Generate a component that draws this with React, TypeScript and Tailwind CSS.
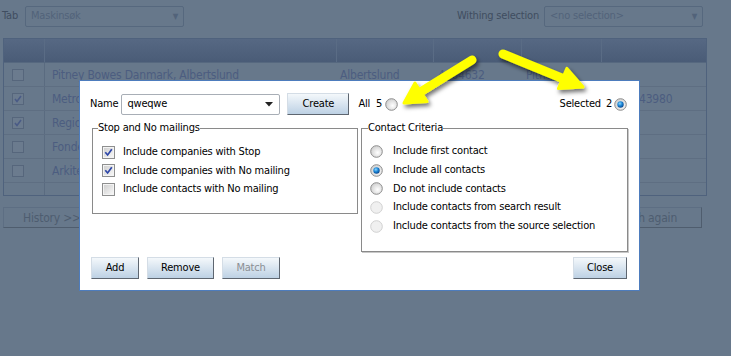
import React from 'react';

const font = "font-['DejaVu_Sans_Condensed','Liberation_Sans',sans-serif]";

function Check({checked, dim}: {checked?: boolean; dim?: boolean}) {
  if (dim) {
    return (
      <svg width="12" height="12" viewBox="0 0 12 12">
        <rect x="0.5" y="0.5" width="11" height="11" fill="#6b7b8e" stroke="#56667c" />
        {checked && <path d="M3 6 L5 8.5 L9 3" fill="none" stroke="#4a5b86" strokeWidth="1.6" />}
      </svg>
    );
  }
  return (
    <svg width="13" height="13" viewBox="0 0 13 13">
      <defs>
        <linearGradient id="cbg" x1="0" y1="0" x2="1" y2="1">
          <stop offset="0" stopColor="#d0d0d0" />
          <stop offset="1" stopColor="#f6f6f6" />
        </linearGradient>
      </defs>
      <rect x="0.5" y="0.5" width="12" height="12" fill="#f4f4f4" stroke="#8e8f8f" />
      <rect x="2" y="2" width="9" height="9" fill="url(#cbg)" />
      {checked && (
        <path d="M3.3 6.3 L5.6 9 L9.8 3.2" fill="none" stroke="#2d46a8" strokeWidth="1.7" />
      )}
    </svg>
  );
}

function Radio({selected, disabled}: {selected?: boolean; disabled?: boolean}) {
  return (
    <svg width="13" height="13" viewBox="0 0 13 13">
      <defs>
        <radialGradient id="rbg" cx="0.6" cy="0.6" r="0.7">
          <stop offset="0" stopColor="#ffffff" />
          <stop offset="1" stopColor="#c9c9c9" />
        </radialGradient>
        <radialGradient id="rdot" cx="0.4" cy="0.35" r="0.7">
          <stop offset="0" stopColor="#8fd6ff" />
          <stop offset="0.5" stopColor="#1a86d6" />
          <stop offset="1" stopColor="#0a3f86" />
        </radialGradient>
      </defs>
      <circle
        cx="6.5"
        cy="6.5"
        r="5.8"
        fill={disabled ? '#f0f0f0' : 'url(#rbg)'}
        stroke={disabled ? '#d0d0d0' : '#8d8d8d'}
        strokeWidth="1"
      />
      {selected && <circle cx="6.5" cy="6.5" r="3.2" fill="url(#rdot)" />}
    </svg>
  );
}

function Btn({label, w, disabled}: {label: string; w: string; disabled?: boolean}) {
  return (
    <button
      className={`${w} h-[22px] border border-[#d4dde6] border-r-[#5e6670] border-b-[#5e6670] bg-linear-to-b from-[#f4f8fb] to-[#bdd1e4] text-[11px] ${
        disabled ? 'text-[#8b8f94]' : 'text-black'
      }`}
    >
      {label}
    </button>
  );
}

const rows = [
  {name: 'Pitney Bowes Danmark, Albertslund', checked: false},
  {name: 'Metroxpress Danmark A/S', checked: true},
  {name: 'Region Hovedstaden', checked: true},
  {name: 'Fonden for Entreprenørskab', checked: false},
  {name: 'Arkitektforeningen', checked: false},
];

function Arrows() {
  return (
    <svg className="absolute top-0 left-0 pointer-events-none" width="731" height="356">
      <defs>
        <filter id="sh" x="-20%" y="-20%" width="140%" height="140%">
          <feDropShadow dx="2" dy="3" stdDeviation="2" floodColor="#000" floodOpacity="0.55" />
        </filter>
      </defs>
      <g filter="url(#sh)" fill="#ffff00" stroke="#ffff00" strokeLinejoin="round">
        <line x1="472" y1="60" x2="422" y2="91" strokeWidth="9" strokeLinecap="round" />
        <polygon points="404,103 427,101.5 415,83" strokeWidth="3" />
        <line x1="503" y1="54" x2="564" y2="79" strokeWidth="9" strokeLinecap="round" />
        <polygon points="583,87 558.4,88.6 566.9,68.4" strokeWidth="3" />
      </g>
    </svg>
  );
}

export default function App() {
  return (
    <div
      className={`relative w-[731px] h-[356px] overflow-hidden bg-[#67788b] text-[11px] tracking-[-0.2px] ${font}`}
    >
      {/* dimmed page behind */}
      <div className="flex items-center pt-[6px] pl-[2px] pr-[28px] text-[#3f4d60]">
        <span>Tab</span>
        <div className="ml-[7px] w-[159px] h-[21px] border border-[#56687e] rounded-[2px] flex items-center px-[5px] text-[#52637a]">
          <span className="flex-1">Maskinsøk</span>
          <span className="text-[8px]">▼</span>
        </div>
        <span className="ml-auto mr-[5px]">Withing selection</span>
        <div className="w-[159px] h-[21px] border border-[#56687e] rounded-[2px] flex items-center px-[5px] text-[#52637a]">
          <span className="flex-1">&lt;no selection&gt;</span>
          <span className="text-[8px]">▼</span>
        </div>
      </div>

      <div className="ml-[3px] mt-[11px] w-[704px] border border-[#4f627d] text-[#4c5d80] text-[12px]">
        <div className="h-[24px] bg-linear-to-b from-[#566883] to-[#4a5c77] grid grid-cols-[41px_292px_97px_88px_80px_1fr] border-b border-[#56687f]">
          <div className="border-r border-[#5a6c85]" />
          <div className="border-r border-[#5a6c85]" />
          <div className="border-r border-[#5a6c85]" />
          <div className="border-r border-[#5a6c85]" />
          <div className="border-r border-[#5a6c85]" />
          <div />
        </div>
        {rows.map((r, i) => (
          <div
            key={r.name}
            className="h-[24px] grid grid-cols-[41px_292px_97px_88px_80px_1fr] border-b border-[#5e6e82] items-center"
          >
            <div className="h-full flex items-center pl-[8px] border-r border-[#5a6b80]">
              <Check dim checked={r.checked} />
            </div>
            <div className="pl-[7px] whitespace-nowrap overflow-hidden">{r.name}</div>
            <div className="pl-[3px]">{i === 0 ? 'Albertslund' : ''}</div>
            <div className="pl-[4px]">{i === 0 ? '4664632' : ''}</div>
            <div className="pl-[4px]">{i === 0 ? 'Pitney' : ''}</div>
            <div className="pl-[37px]">{i === 1 ? '43980' : ''}</div>
          </div>
        ))}
        <div className="h-[12px] border-r border-[#5a6b80] w-[41px]" />
      </div>

      <div className="flex mt-[11px] ml-[3px] mr-[29px] text-[#4e5d70] text-[12px]">
        <div className="w-[160px] h-[21px] border border-[#5d6e83] border-r-[#4f5d6e] border-b-[#4f5d6e] pl-[19px] flex items-center">
          History &gt;&gt;
        </div>
        <div className="ml-auto w-[104px] h-[21px] border border-[#5d6e83] border-r-[#4f5d6e] border-b-[#4f5d6e] pl-[10px] flex items-center">
          Search again
        </div>
      </div>

      {/* dialog */}
      <div className="absolute left-[79px] top-[80px] w-[561px] h-[211px] bg-white border border-[#4d7cbd] text-black pt-[12px] px-[11px]">
        <div className="flex items-center h-[22px] -ml-[1px]">
          <span>Name</span>
          <div className="ml-[3px] w-[159px] h-[21px] border border-[#a8aeb6] rounded-[2px] flex items-center pl-[5px] pr-[6px]">
            <span className="flex-1">qweqwe</span>
            <svg width="8" height="5" viewBox="0 0 8 5">
              <path d="M0 0 H8 L4 4.5 Z" fill="#222" />
            </svg>
          </div>
          <div className="ml-[7px]">
            <Btn label="Create" w="w-[62px]" />
          </div>
          <span className="ml-[9px]">All</span>
          <span className="ml-[6px]">5</span>
          <span className="ml-[3px] flex">
            <Radio />
          </span>
          <span className="ml-auto">Selected</span>
          <span className="ml-[5px]">2</span>
          <span className="ml-[2px] mr-[1px] flex">
            <Radio selected />
          </span>
        </div>

        <div className="flex items-start mt-[6px] ml-[1px]">
          <fieldset className="w-[266px] h-[93px] border border-[#8a8a8a] p-0">
            <legend className="ml-[5px] leading-[14px]">Stop and No mailings</legend>
            <div className="pt-[8px] pl-[9px] flex flex-col">
              {[
                ['Include companies with Stop', true],
                ['Include companies with No mailing', true],
                ['Include contacts with No mailing', false],
              ].map(([t, c]) => (
                <div key={t as string} className="h-[18.5px] flex items-center">
                  <Check checked={c as boolean} />
                  <span className="ml-[8px]">{t}</span>
                </div>
              ))}
            </div>
          </fieldset>
          <fieldset className="ml-[3px] w-[267px] h-[131px] border border-[#8a8a8a] shadow-[1px_1px_0_#c8c8c8] p-0">
            <legend className="ml-[6px] leading-[14px]">Contact Criteria</legend>
            <div className="pt-[7px] pl-[8px] flex flex-col">
              {[
                ['Include first contact', false, false],
                ['Include all contacts', true, false],
                ['Do not include contacts', false, false],
                ['Include contacts from search result', false, true],
                ['Include contacts from the source selection', false, true],
              ].map(([t, s, d]) => (
                <div key={t as string} className="h-[18.75px] flex items-center whitespace-nowrap">
                  <Radio selected={s as boolean} disabled={d as boolean} />
                  <span className="ml-[10px]">{t}</span>
                </div>
              ))}
            </div>
          </fieldset>
        </div>

        <div className="flex mt-[5px] gap-[8px]">
          <Btn label="Add" w="w-[48px]" />
          <Btn label="Remove" w="w-[67px]" />
          <Btn label="Match" w="w-[58px]" disabled />
          <div className="ml-auto mr-[1px]">
            <Btn label="Close" w="w-[54px]" />
          </div>
        </div>
      </div>

      <Arrows />
    </div>
  );
}
